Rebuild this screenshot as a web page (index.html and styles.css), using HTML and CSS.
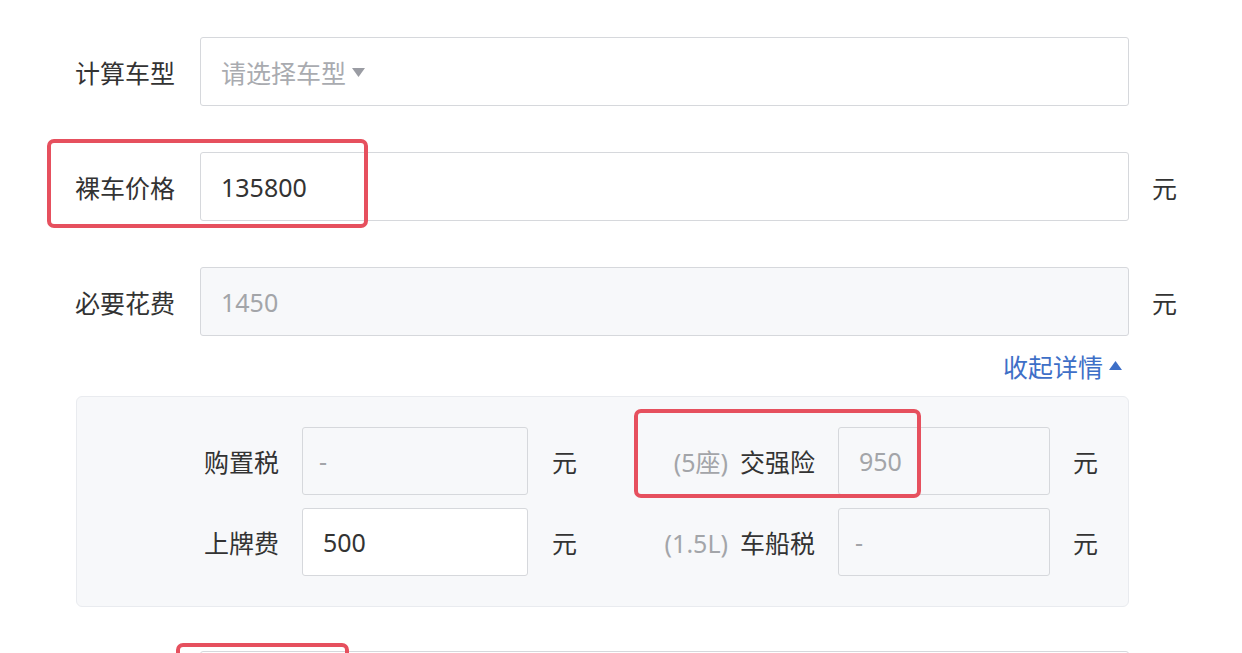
FILE: index.html
```html
<!DOCTYPE html>
<html lang="zh-CN">
<head>
<meta charset="utf-8">
<title>购车计算</title>
<link rel="stylesheet" href="styles.css">
</head>
<body>
<div class="page">
  <div class="row">
    <div class="label">计算车型</div>
    <div class="field select"><span class="placeholder">请选择车型</span><svg class="caret" width="13" height="10" viewBox="0 0 13 10"><path d="M0 0H13L6.5 9Z" fill="#9a9ca3"/></svg></div>
    <div class="unit"></div>
  </div>
  <div class="row">
    <div class="label">裸车价格</div>
    <div class="field"><span class="value">135800</span></div>
    <div class="unit">元</div>
  </div>
  <div class="row">
    <div class="label">必要花费</div>
    <div class="field disabled"><span class="muted">1450</span></div>
    <div class="unit">元</div>
  </div>
  <div class="toggle-row">
    <span class="toggle">收起详情<svg class="up" width="13" height="10" viewBox="0 0 13 10"><path d="M0 9H13L6.5 0Z" fill="#3e6fc7"/></svg></span>
  </div>
  <div class="panel">
    <div class="sub-label">购置税</div>
    <div class="field sub-field w1 disabled"><span class="muted dash">-</span></div>
    <div class="sub-unit u1">元</div>
    <div class="sub-label l2"><span class="note">(5座)</span>交强险</div>
    <div class="field sub-field w2 disabled"><span class="muted">950</span></div>
    <div class="sub-unit">元</div>

    <div class="sub-label">上牌费</div>
    <div class="field sub-field w1"><span class="value">500</span></div>
    <div class="sub-unit u1">元</div>
    <div class="sub-label l2"><span class="note">(1.5L)</span>车船税</div>
    <div class="field sub-field w2 disabled"><span class="muted dash">-</span></div>
    <div class="sub-unit">元</div>
  </div>
  <div class="row last">
    <div class="label"></div>
    <div class="field"></div>
    <div class="unit"></div>
  </div>

  <div class="mark mark-price"></div>
  <div class="mark mark-insure"></div>
  <div class="mark mark-bottom"></div>
</div>
</body>
</html>
```

FILE: styles.css
```css
html, body {
  margin: 0;
  padding: 0;
  background: #ffffff;
  overflow: hidden;
}
body {
  font-family: "Noto Sans", "Noto Sans CJK SC", sans-serif;
  font-size: 25px;
  color: #333333;
}
.page {
  position: relative;
  width: 1242px;
  height: 653px;
  overflow: hidden;
  padding: 37px 0 0 75px;
  box-sizing: border-box;
}
.row {
  display: flex;
  align-items: center;
  height: 69px;
  margin-bottom: 46px;
}
.row.last {
  margin-top: 44px;
}
.label {
  width: 125px;
  flex: none;
  color: #333333;
  white-space: nowrap;
}
.field {
  box-sizing: border-box;
  border: 1px solid #d6d8dc;
  border-radius: 3px;
  background: #ffffff;
  display: flex;
  align-items: center;
  padding-left: 20px;
  height: 69px;
}
.row .field {
  width: 929px;
  flex: none;
}
.field.disabled {
  background: #f7f8fa;
}
.placeholder {
  color: #a9abb0;
}
.caret {
  margin-left: 6px;
  margin-top: 2px;
}
.value {
  color: #333333;
}
.muted {
  color: #a3a5a9;
}
.unit {
  padding-left: 23px;
  color: #333333;
}
.toggle-row {
  height: 60px;
  margin-top: -46px;
  width: 1047px;
  display: flex;
  align-items: center;
  justify-content: flex-end;
}
.toggle {
  color: #3e6fc7;
  display: flex;
  align-items: center;
  font-size: 25px;
}
.up {
  margin-left: 6px;
}
.panel {
  margin-left: 1px;
  width: 1053px;
  box-sizing: border-box;
  background: #f7f8fa;
  border: 1px solid #e9ebef;
  border-radius: 6px;
  padding: 30px 0;
  display: grid;
  grid-template-columns: 225px 226px 72px 238px 212px 1fr;
  grid-template-rows: 68px 68px;
  row-gap: 13px;
  align-items: center;
}
.sub-label {
  text-align: right;
  padding-right: 23px;
  white-space: nowrap;
}
.note {
  color: #a3a5a9;
  margin-right: 12px;
}
.sub-field {
  height: 68px;
}
.sub-field .dash {
  margin-left: -4px;
}
.sub-unit {
  padding-left: 23px;
}
.sub-unit.u1 {
  padding-left: 24px;
}
.mark {
  position: absolute;
  border: 4px solid #e6505e;
  border-radius: 7px;
  box-sizing: border-box;
}
.mark-price {
  left: 47px;
  top: 139px;
  width: 321px;
  height: 89px;
}
.mark-insure {
  left: 634px;
  top: 409px;
  width: 287px;
  height: 89px;
}
.mark-bottom {
  left: 176px;
  top: 643px;
  width: 173px;
  height: 60px;
}
```
